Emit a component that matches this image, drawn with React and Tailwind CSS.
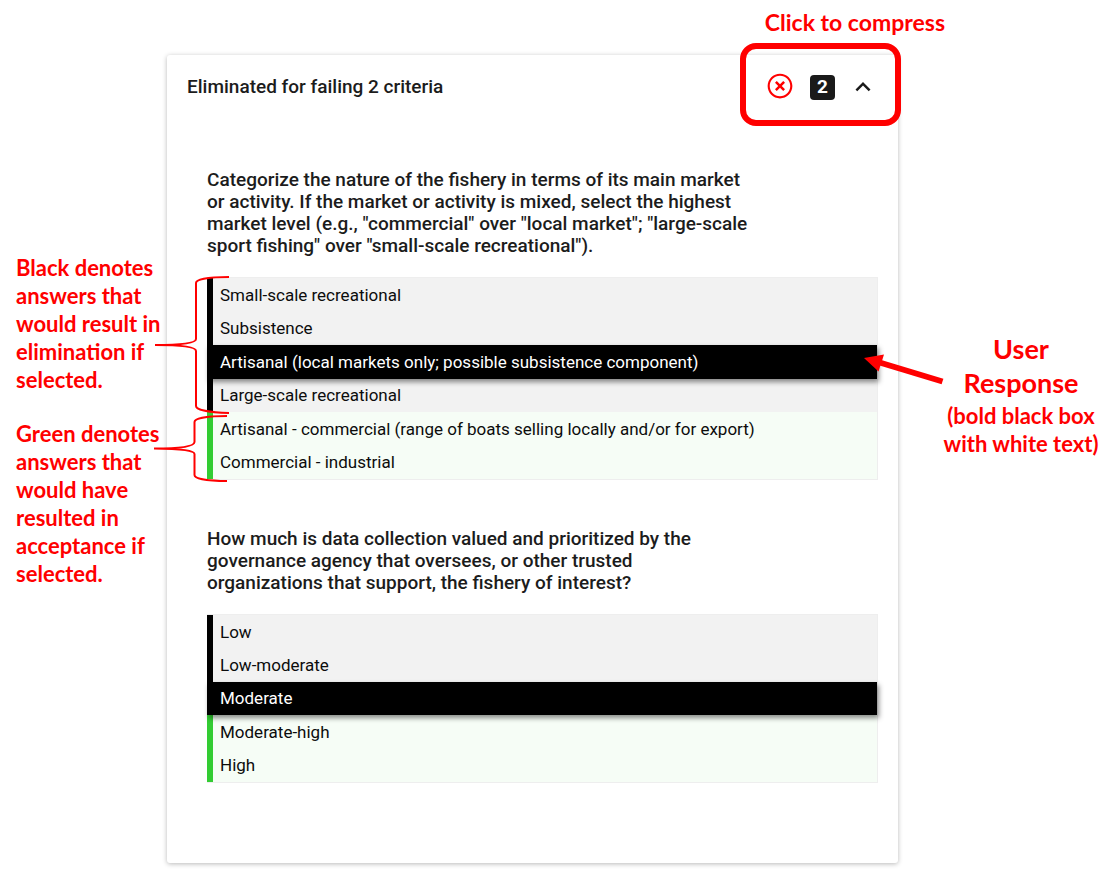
import { useState } from "react";

const questions = [
  {
    id: "market",
    text: 'Categorize the nature of the fishery in terms of its main market or activity. If the market or activity is mixed, select the highest market level (e.g., "commercial" over "local market"; "large-scale sport fishing" over "small-scale recreational").',
    height: "min-h-[203px]",
    annotated: true,
    answers: [
      { label: "Small-scale recreational", pass: false },
      { label: "Subsistence", pass: false },
      {
        label: "Artisanal (local markets only; possible subsistence component)",
        pass: false,
        selected: true,
      },
      { label: "Large-scale recreational", pass: false },
      {
        label: "Artisanal - commercial (range of boats selling locally and/or for export)",
        pass: true,
      },
      { label: "Commercial - industrial", pass: true },
    ],
  },
  {
    id: "data",
    text: "How much is data collection valued and prioritized by the governance agency that oversees, or other trusted organizations that support, the fishery of interest?",
    height: "min-h-[169px]",
    answers: [
      { label: "Low", pass: false },
      { label: "Low-moderate", pass: false },
      { label: "Moderate", pass: false, selected: true },
      { label: "Moderate-high", pass: true },
      { label: "High", pass: true },
    ],
  },
];

function rowStyle(answer) {
  if (answer.selected)
    return "relative z-10 border-black bg-black text-white shadow-[2px_3px_5px_rgba(0,0,0,0.45)]";
  if (answer.pass) return "border-[#33cc33] bg-[#f6fdf6] text-[#0c0c0c]";
  return "border-black bg-[#f2f2f2] text-[#0c0c0c]";
}

function Braces() {
  return (
    <svg
      aria-hidden="true"
      className="pointer-events-none absolute -top-1 -left-[57px] z-20"
      width="84"
      height="212"
      viewBox="150 273 84 212"
      fill="none"
      stroke="#f00"
      strokeWidth="2"
    >
      <path d="M229 277C210 277 196 279 196 283V339C196 343 184 345 155 345C184 345 196 347 196 351V406C196 410 210 412.500 229 413" />
      <path d="M227 416C209 416 194.500 418 194.500 422V442C194.500 446 183 448.500 154 448.500C183 448.500 194.500 451 194.500 454V475C194.500 479 209 481 227 481" />
    </svg>
  );
}

function Arrow() {
  return (
    <svg
      aria-hidden="true"
      className="pointer-events-none absolute top-[76px] -right-[69px] z-20"
      width="87"
      height="36"
      viewBox="860 353 87 36"
    >
      <path d="M878 362L942.500 381.500" stroke="#f00" strokeWidth="6" />
      <path d="M864 358L884 354.500L878.500 371.500Z" fill="#f00" />
    </svg>
  );
}

function Question({ question }) {
  return (
    <section>
      <h2
        id={question.id}
        className="max-w-[545px] text-[19px] leading-[22px] font-medium text-[#1c1c1c]"
      >
        {question.text}
      </h2>
      <div className="relative mt-5">
        <ul
          aria-labelledby={question.id}
          className={`grid auto-rows-fr border-y border-r border-[#eeeeee] ${question.height}`}
        >
          {question.answers.map((answer) => (
            <li
              key={answer.label}
              className={`flex items-center border-l-6 pl-[7px] text-[17px] leading-5 ${rowStyle(answer)}`}
            >
              {answer.label}
            </li>
          ))}
        </ul>
        {question.annotated && (
          <>
            <Braces />
            <Arrow />
          </>
        )}
      </div>
    </section>
  );
}

export default function App() {
  const [open, setOpen] = useState(true);
  return (
    <main className="min-h-screen bg-white font-['Roboto',sans-serif]">
      <div className="grid grid-cols-[167px_minmax(0,1fr)_219px] grid-rows-[55px_auto] pb-4">
        <p className="col-span-2 col-start-2 pt-2 pr-[172px] text-right font-['Lato',sans-serif] text-[23px] leading-7 font-bold text-[#f00]">
          Click to compress
        </p>

        <aside className="row-start-2 flex flex-col gap-[26px] pt-[199px] pl-4 font-['Lato',sans-serif] text-[22px] leading-7 font-bold whitespace-nowrap text-[#f00]">
          <p>
            Black denotes
            <br />
            answers that
            <br />
            would result in
            <br />
            elimination if
            <br />
            selected.
          </p>
          <p>
            Green denotes
            <br />
            answers that
            <br />
            would have
            <br />
            resulted in
            <br />
            acceptance if
            <br />
            selected.
          </p>
        </aside>

        <article className="row-start-2 rounded-[3px] bg-white pb-20 shadow-[0_1px_5px_rgba(0,0,0,0.28)]">
          <header className="relative flex h-16 items-center justify-between px-5">
            <h1 className="text-[19px] leading-6 font-medium text-[#1c1c1c]">
              Eliminated for failing 2 criteria
            </h1>
            <button
              type="button"
              aria-expanded={open}
              aria-label="2 failed criteria, toggle details"
              onClick={() => setOpen(!open)}
              className="flex items-center gap-[13px]"
            >
              <span className="flex items-center gap-[15px]">
                <svg width="30" height="30" viewBox="0 0 24 24" fill="#ff0000">
                  <path d="M14.590 7.200L12 9.790 9.410 7.200 8 8.610 10.590 11.200 8 13.790 9.410 15.200 12 12.610 14.590 15.200 16 13.790 13.410 11.200 16 8.610 14.590 7.200zM12 1.300C6.530 1.300 2.100 5.730 2.100 11.200s4.430 9.900 9.900 9.900 9.900-4.430 9.900-9.900S17.470 1.300 12 1.300zm0 18.100c-4.530 0-8.200-3.670-8.200-8.200s3.670-8.200 8.200-8.200 8.200 3.670 8.200 8.200-3.670 8.200-8.200 8.200z" />
                </svg>
                <span className="flex size-[25px] items-center justify-center rounded bg-[#1a1a1a] text-[19px] leading-6 font-bold text-white">
                  2
                </span>
              </span>
              <svg
                width="30"
                height="30"
                viewBox="0 0 24 24"
                fill="#1a1a1a"
                className={open ? "" : "rotate-180"}
              >
                <path d="M12 8l-6 6 1.410 1.410L12 10.830l4.590 4.580L18 14z" />
              </svg>
            </button>
            <div className="pointer-events-none absolute -top-3 -right-[3px] h-[83px] w-[161px] rounded-2xl border-6 border-[#f00]" />
          </header>

          {open && (
            <div className="flex flex-col gap-12 pt-[50px] pr-5 pl-10">
              {questions.map((question) => (
                <Question key={question.id} question={question} />
              ))}
            </div>
          )}
        </article>

        <aside className="row-start-2 flex flex-col gap-0.5 pt-[277px] pl-[27px] text-center font-['Lato',sans-serif] font-bold text-[#f00]">
          <p className="text-[27px] leading-[34px]">
            User
            <br />
            Response
          </p>
          <p className="text-[22px] leading-7">
            (bold black box
            <br />
            with white text)
          </p>
        </aside>
      </div>
    </main>
  );
}
